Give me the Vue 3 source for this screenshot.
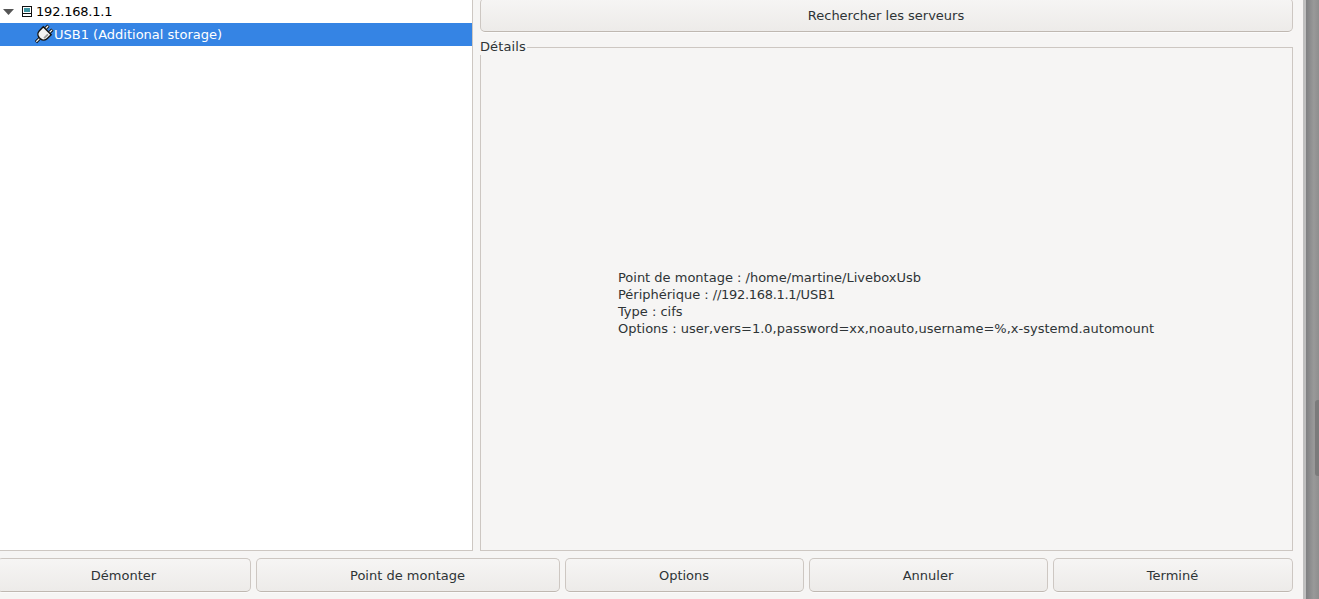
<script setup>
const bottomButtons = [
  { label: 'Démonter', cls: 'b1' },
  { label: 'Point de montage', cls: 'b2' },
  { label: 'Options', cls: 'b3' },
  { label: 'Annuler', cls: 'b3' },
  { label: 'Terminé', cls: 'b3' },
]
</script>

<template>
  <div class="screen">
    <div class="window">
      <div class="top">
        <div class="tree">
          <div class="row host">
            <svg class="arrow" width="12" height="8" viewBox="0 0 12 8"><path d="M1 1h11L6.5 7z" fill="#555" /></svg>
            <svg class="hosticon" width="10" height="11" viewBox="0 0 10 11">
              <rect x="0.5" y="0.5" width="9" height="10" fill="#fff" stroke="#111" />
              <rect x="2" y="2" width="6" height="4" fill="#3f96a3" />
              <rect x="1" y="7" width="8" height="1" fill="#111" />
            </svg>
            <span class="tight">192.168.1.1</span>
          </div>
          <div class="row selected">
            <svg class="plug" width="18" height="18" viewBox="0 0 18 18">
              <g transform="rotate(45 8 9)">
                <path d="M5.2 4V-1.5M10.8 4V-1.5" stroke="#111" stroke-width="3.2" fill="none" />
                <path d="M5.2 4V-1M10.8 4V-1" stroke="#f4f4f4" stroke-width="1.3" fill="none" />
                <path d="M8 12v7" stroke="#111" stroke-width="3.2" fill="none" />
                <path d="M8 12v6.5" stroke="#f4f4f4" stroke-width="1.3" fill="none" />
                <path d="M2.4 3h11.2v5.5a5 5 0 0 1-4.6 5H7a5 5 0 0 1-4.6-5z" fill="#f2f2f2" stroke="#111" stroke-width="1.4" />
                <path d="M11 5v5.5" stroke="#999" stroke-width="1.8" fill="none" />
              </g>
            </svg>
            <span>USB1 (Additional storage)</span>
          </div>
        </div>
        <div class="side">
          <button class="btn search"><span>Rechercher les serveurs</span></button>
          <div class="frame">
            <span class="legend">Détails</span>
            <div class="info">
              <div>Point de montage : /home/martine/LiveboxUsb</div>
              <div>Périphérique : <span class="tight-path">//192.168.1.1/</span>USB1</div>
              <div>Type : cifs</div>
              <div>Options : user,vers=1.0,password=xx,noauto,username=%,x-systemd.automount</div>
            </div>
          </div>
        </div>
      </div>
      <div class="actions">
        <button v-for="b in bottomButtons" :key="b.label" class="btn" :class="b.cls"><span>{{ b.label }}</span></button>
      </div>
    </div>
    <div class="edge"></div>
    <div class="rail"><div class="thumb"></div></div>
  </div>
</template>

<style scoped>
.screen {
  width: 1319px;
  height: 599px;
  display: flex;
  overflow: hidden;
  font-family: "DejaVu Sans", sans-serif;
  font-size: 13px;
  color: #2e3436;
  background: #f6f5f4;
}
.window {
  width: 1303px;
  flex: none;
  display: flex;
  flex-direction: column;
  overflow: hidden;
  background: #f6f5f4;
}
.edge {
  width: 3px;
  flex: none;
  background: #bfbfbf;
}
.rail {
  flex: 1;
  display: flex;
  justify-content: flex-end;
  padding-top: 400px;
  background: linear-gradient(to right, #7f8082, #999 60%, #8e8e8e);
}
.thumb {
  width: 4px;
  height: 76px;
  border-radius: 3px 0 0 3px;
  background: #7b7b7b;
}
.top {
  height: 551px;
  flex: none;
  display: flex;
  gap: 7px;
}
.tree {
  width: 473px;
  flex: none;
  background: #fff;
  border-right: 1px solid #cdc7c2;
  border-bottom: 1px solid #cdc7c2;
  box-sizing: border-box;
  color: #000;
}
.row {
  height: 23px;
  display: flex;
  align-items: center;
  line-height: 23px;
}
.host {
  padding-left: 2px;
}
.arrow {
  margin-right: 8px;
  flex: none;
}
.hosticon {
  margin-right: 4px;
  flex: none;
}
.tight {
  letter-spacing: -0.2px;
}
.tight-path {
  letter-spacing: -0.3px;
}
.selected {
  background: #3584e4;
  color: #fff;
  padding-left: 35px;
}
.plug {
  flex: none;
  margin-right: 1px;
  overflow: visible;
}
.side {
  width: 813px;
  flex: none;
  display: flex;
  flex-direction: column;
}
.btn {
  box-sizing: border-box;
  height: 34px;
  margin: 0;
  padding: 0 1px 0 0;
  font: inherit;
  color: #2e3436;
  border: 1px solid #cdc7c2;
  border-bottom-color: #bfb8b1;
  border-radius: 5px;
  background: linear-gradient(to bottom, #f6f5f4, #edebe9);
  box-shadow: 0 1px 0 rgba(255, 255, 255, 0.6);
}
.search {
  flex: none;
  width: 100%;
  margin-top: -2px;
}
.frame {
  position: relative;
  flex: 1;
  margin-top: 15px;
  border: 1px solid #cdc7c2;
  display: flex;
  align-items: center;
  justify-content: center;
}
.legend {
  position: absolute;
  left: -1px;
  top: -9px;
  line-height: 16px;
  padding-right: 1px;
  letter-spacing: 0.1px;
  background: #f6f5f4;
}
.info {
  line-height: 17px;
  white-space: nowrap;
  padding: 8px 1px 0 0;
}
.actions {
  flex: none;
  display: flex;
  gap: 5px;
  margin-top: 7px;
  margin-left: -3px;
  width: 1296px;
}
.b1 {
  width: 254px;
  flex: none;
}
.b2 {
  width: 304px;
  flex: none;
}
.b3 {
  width: 239px;
  flex: none;
}
.b3:last-child {
  width: 240px;
}
</style>
